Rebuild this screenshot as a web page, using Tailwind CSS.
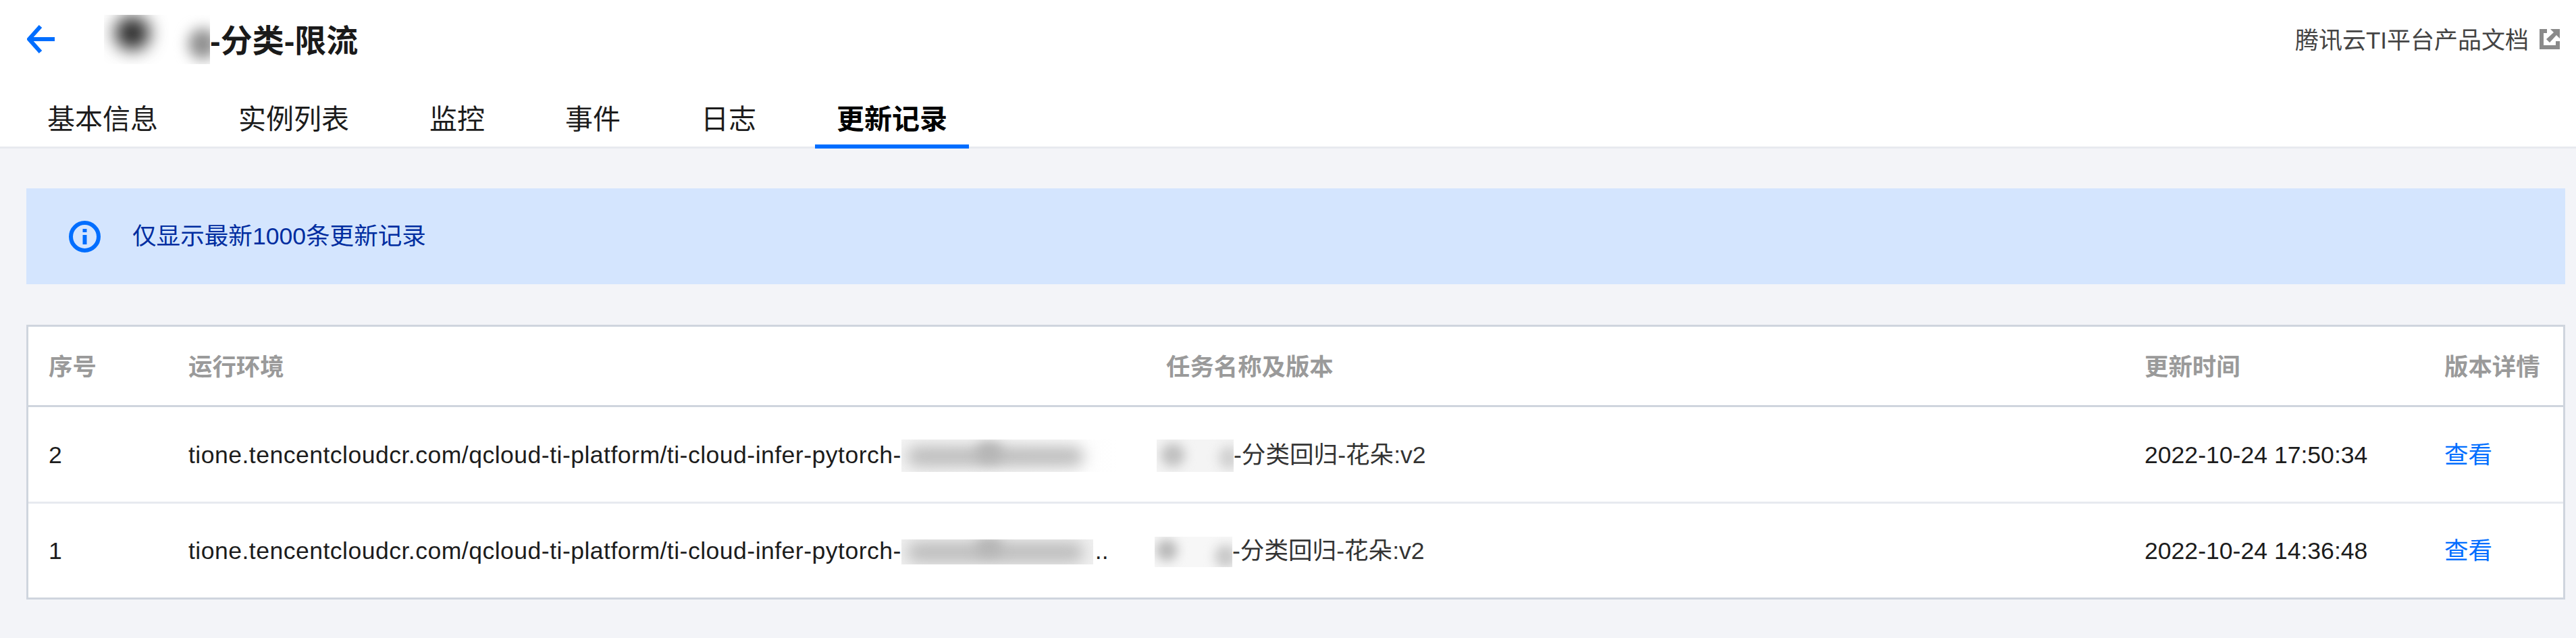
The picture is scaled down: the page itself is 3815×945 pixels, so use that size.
<!DOCTYPE html>
<html lang="zh-CN">
<head>
    <meta charset="UTF-8">
    <title>更新记录</title>
    <script src="https://cdn.jsdelivr.net/npm/@tailwindcss/browser@4"></script>
</head>
<body class="bg-[#f3f4f8] h-[945px] overflow-hidden font-['Liberation_Sans','Noto_Sans_CJK_SC',sans-serif] text-[35.6px] text-[#1c1c1c]">
    <!-- Header -->
    <header class="bg-white border-b-[3px] border-[#e8eaef]">
        <div class="h-[116px] flex items-center justify-between pl-[40px] pr-[24px]">
            <div class="flex items-center">
                <svg class="w-[42px] h-[44px] text-[#006eff]" viewBox="0 0 42 44" fill="none" stroke="currentColor" stroke-width="6">
                    <path d="M20 3 L3 22 L20 41 M3 22 H41" stroke-linejoin="round"></path>
                </svg>
                <div class="relative w-[157px] h-[73px] ml-[72px] overflow-hidden bg-white">
                    <span class="absolute left-[16px] top-[2px] w-[52px] h-[50px] rounded-full bg-[#2a2a2a] blur-[13px]"></span>
                    <span class="absolute right-[-10px] top-[20px] w-[42px] h-[46px] rounded-full bg-[#909090] blur-[10px]"></span>
                </div>
                <h1 class="text-[47px] font-bold leading-none text-[#1a1a1a] mt-[5px]">-分类-限流</h1>
            </div>
            <div class="flex items-center gap-[16px] text-[35px] text-[#444]">
                <span class="leading-none mt-[2px]">腾讯云TI平台产品文档</span>
                <svg class="w-[30px] h-[30px] text-[#8a8a8a]" viewBox="0 0 30 30" fill="currentColor">
                    <path d="M0 0 H11 V6 H6 V24 H24 V18 H30 V30 H0 Z"></path>
                    <path d="M16 0 H30 V14 L25 9 L15 20 L10 15 L21 5 Z"></path>
                </svg>
            </div>
        </div>
        <nav class="h-[101px] flex pl-[38px] gap-[55px] text-[41px] leading-none">
            <a class="h-[104px] px-[32px] pt-[24px] flex items-center border-b-[6px] border-transparent">基本信息</a>
            <a class="h-[104px] px-[32px] pt-[24px] flex items-center border-b-[6px] border-transparent">实例列表</a>
            <a class="h-[104px] px-[32px] pt-[24px] flex items-center border-b-[6px] border-transparent">监控</a>
            <a class="h-[104px] px-[32px] pt-[24px] flex items-center border-b-[6px] border-transparent">事件</a>
            <a class="h-[104px] px-[32px] pt-[24px] flex items-center border-b-[6px] border-transparent">日志</a>
            <a class="h-[104px] px-[32px] pt-[24px] flex items-center border-b-[6px] border-[#006eff] font-bold text-black">更新记录</a>
        </nav>
    </header>

    <main class="pl-[39px] pr-[16px]">
        <!-- Notice -->
        <div class="mt-[59px] h-[142px] bg-[#d4e5fe] flex items-center pl-[63px] gap-[47px] text-[#002da0]">
            <svg class="w-[47px] h-[47px] text-[#006eff]" viewBox="0 0 47 47" fill="none" stroke="currentColor">
                <circle cx="23.5" cy="23.5" r="20.5" stroke-width="6"></circle>
                <path d="M23.5 12 V17 M23.5 21 V35" stroke-width="6"></path>
            </svg>
            <span class="leading-none mt-[2px]">仅显示最新1000条更新记录</span>
        </div>

        <!-- Records -->
        <div class="mt-[60px] bg-white border-[3px] border-[#cfd5de]">
            <div class="h-[119px] pt-[6px] border-b-[3px] border-[#cfd5de] grid grid-cols-[207px_1448px_1450px_443px_1fr] items-center text-[35.4px] text-[#9a9a9a] font-bold leading-none">
                <div class="pl-[30px]">序号</div>
                <div class="pl-[30px]">运行环境</div>
                <div class="pl-[30px]">任务名称及版本</div>
                <div class="pl-[29px]">更新时间</div>
                <div class="pl-[30px]">版本详情</div>
            </div>
            <div class="h-[143px] pt-[3px] border-b-[3px] border-[#e7eaef] grid grid-cols-[207px_1448px_1450px_443px_1fr] items-center leading-none">
                <div class="pl-[30px]">2</div>
                <div class="pl-[30px] flex items-center whitespace-nowrap">
                    <span class="tracking-[0.47px]">tione.tencentcloudcr.com/qcloud-ti-platform/ti-cloud-infer-pytorch-</span>
                    <div class="relative w-[320px] h-[48px] shrink-0 overflow-hidden bg-gradient-to-r from-[#f4f4f4] to-white">
                        <span class="absolute left-[8px] top-[10px] w-[262px] h-[30px] rounded-full bg-[#bcbcbc] blur-[11px]"></span>
                        <span class="absolute left-[110px] top-[4px] w-[40px] h-[30px] rounded-full bg-[#b4b4b4] blur-[9px]"></span>
                    </div>
                </div>
                <div class="pl-[16px] flex items-center whitespace-nowrap">
                    <div class="relative w-[114px] h-[48px] shrink-0 overflow-hidden bg-[#f4f4f4]">
                        <span class="absolute left-[6px] top-[6px] w-[36px] h-[34px] rounded-full bg-[#c0c0c0] blur-[8px]"></span>
                        <span class="absolute right-[-8px] top-[10px] w-[30px] h-[34px] rounded-full bg-[#d0d0d0] blur-[8px]"></span>
                    </div>
                    <span class="text-[#333]">-分类回归-花朵:v2</span>
                </div>
                <div class="pl-[29px]">2022-10-24 17:50:34</div>
                <div class="pl-[30px] text-[#006eff]">查看</div>
            </div>
            <div class="h-[139px] pt-[3px] grid grid-cols-[207px_1448px_1450px_443px_1fr] items-center leading-none">
                <div class="pl-[30px]">1</div>
                <div class="pl-[30px] flex items-center whitespace-nowrap">
                    <span class="tracking-[0.47px]">tione.tencentcloudcr.com/qcloud-ti-platform/ti-cloud-infer-pytorch-</span>
                    <div class="relative w-[284px] h-[37px] shrink-0 overflow-hidden bg-[#f0f0f0]">
                        <span class="absolute left-[8px] top-[4px] w-[262px] h-[30px] rounded-full bg-[#bcbcbc] blur-[11px]"></span>
                        <span class="absolute left-[110px] top-[-2px] w-[40px] h-[26px] rounded-full bg-[#b4b4b4] blur-[9px]"></span>
                    </div>
                    <span class="ml-[3px]">..</span>
                </div>
                <div class="pl-[13px] flex items-center whitespace-nowrap">
                    <div class="relative w-[115px] h-[45px] shrink-0 overflow-hidden bg-[#f7f7f7]">
                        <span class="absolute left-[2px] top-[4px] w-[32px] h-[32px] rounded-full bg-[#b8b8b8] blur-[8px]"></span>
                        <span class="absolute right-[-6px] top-[12px] w-[32px] h-[34px] rounded-full bg-[#c8c8c8] blur-[8px]"></span>
                    </div>
                    <span class="text-[#333]">-分类回归-花朵:v2</span>
                </div>
                <div class="pl-[29px]">2022-10-24 14:36:48</div>
                <div class="pl-[30px] text-[#006eff]">查看</div>
            </div>
        </div>
    </main>
</body>
</html>
